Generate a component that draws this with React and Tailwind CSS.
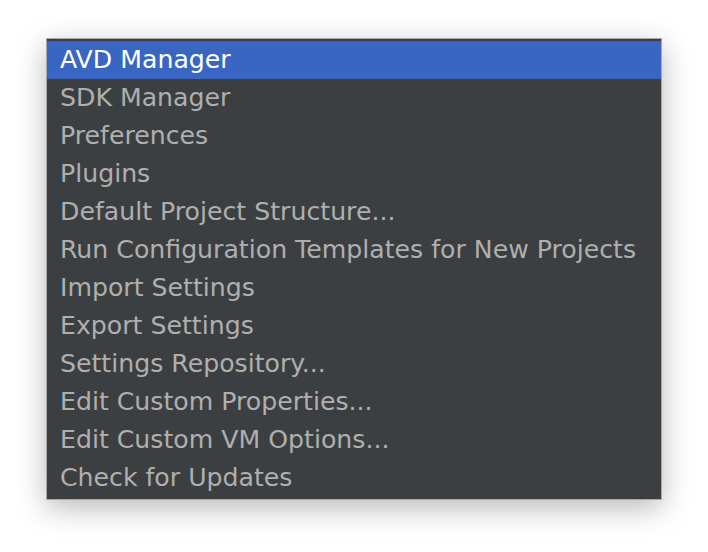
import React from "react";

const items = [
  "AVD Manager",
  "SDK Manager",
  "Preferences",
  "Plugins",
  "Default Project Structure...",
  "Run Configuration Templates for New Projects",
  "Import Settings",
  "Export Settings",
  "Settings Repository...",
  "Edit Custom Properties...",
  "Edit Custom VM Options...",
  "Check for Updates",
];

export default function App() {
  return (
    <div className="w-[708px] h-[552px] bg-white pt-[38px] pl-[46px]">
      <div
        className="w-[616px] bg-[#3c3f41] py-[2px] border border-[#a9a9a9] shadow-[0_8px_28px_rgba(0,0,0,0.28)]"
        style={{ fontFamily: '"DejaVu Sans", sans-serif' }}
      >
        {items.map((label, i) => (
          <div
            key={label}
            className={`h-[38px] flex items-center pl-[13px] text-[25.2px] whitespace-nowrap ${
              i === 0 ? "bg-[#3866c2] text-white" : "text-[#afafaf]"
            }`}
          >
            {label}
          </div>
        ))}
      </div>
    </div>
  );
}
